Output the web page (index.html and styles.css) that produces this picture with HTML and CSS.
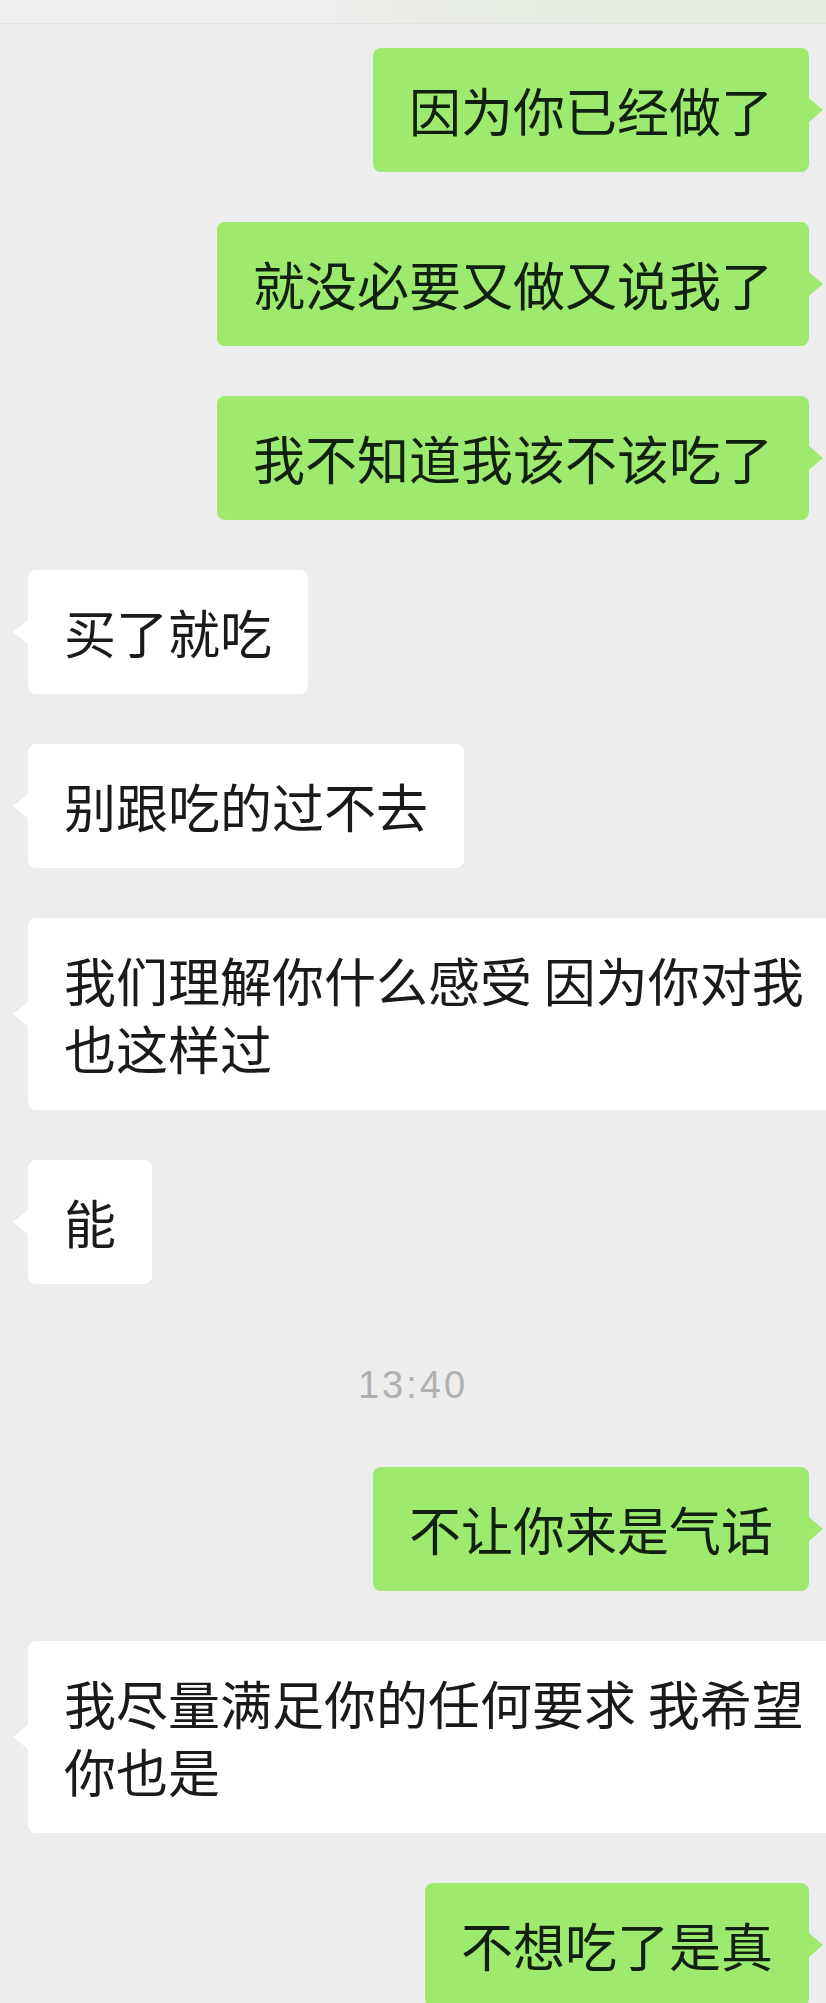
FILE: index.html
```html
<!DOCTYPE html>
<html lang="zh-CN">
<head>
    <meta charset="UTF-8">
    <meta name="viewport" content="width=device-width, initial-scale=1.0">
    <title>聊天记录</title>
    <link rel="stylesheet" href="styles.css">
</head>
<body>
    <div class="topbar"></div>
    <div class="chat">
        <div class="row me"><div class="bubble">因为你已经做了</div></div>
        <div class="row me"><div class="bubble">就没必要又做又说我了</div></div>
        <div class="row me"><div class="bubble">我不知道我该不该吃了</div></div>
        <div class="row other"><div class="bubble">买了就吃</div></div>
        <div class="row other"><div class="bubble">别跟吃的过不去</div></div>
        <div class="row other"><div class="bubble wide">我们理解你什么感受 因为你对我也这样过</div></div>
        <div class="row other"><div class="bubble">能</div></div>
        <div class="time">13:40</div>
        <div class="row me"><div class="bubble">不让你来是气话</div></div>
        <div class="row other"><div class="bubble wide">我尽量满足你的任何要求 我希望你也是</div></div>
        <div class="row me"><div class="bubble">不想吃了是真</div></div>
    </div>
</body>
</html>
```

FILE: styles.css
```css
body {
    margin: 0;
    background: #ededed;
    font-family: "Noto Sans CJK SC", "Noto Sans", sans-serif;
    overflow: hidden;
}
.topbar {
    height: 23px;
    background: linear-gradient(to right, #efefef 0%, #eeeeee 38%, #e8ece4 52%, #e5ebe1 100%);
    border-bottom: 1px solid #e1e1e1;
}
.chat {
    display: flex;
    flex-direction: column;
    gap: 50px;
    padding-top: 24px;
}
.row {
    display: flex;
}
.row.me {
    justify-content: flex-end;
    padding-right: 17px;
}
.row.other {
    justify-content: flex-start;
    padding-left: 28px;
}
.bubble {
    position: relative;
    font-size: 52px;
    line-height: 68px;
    padding: 28px 36px;
    border-radius: 8px;
    color: #1a1a1a;
    background: #ffffff;
    white-space: nowrap;
}
/* long messages run off the right edge of the screenshot */
.bubble.wide {
    white-space: normal;
    flex: 1;
    padding-right: 0;
    border-radius: 8px 0 0 8px;
}
.me .bubble {
    background: #9eea6f;
    color: #112010;
}
.bubble::before {
    content: "";
    position: absolute;
    top: 50%;
    margin-top: -12px;
    border-top: 12px solid transparent;
    border-bottom: 12px solid transparent;
}
.me .bubble::before {
    right: -14px;
    border-left: 14px solid #9eea6f;
}
.other .bubble::before {
    left: -15px;
    border-right: 15px solid #ffffff;
}
.time {
    text-align: center;
    font-family: "Liberation Sans", Arial, sans-serif;
    font-size: 38px;
    letter-spacing: 3px;
    line-height: 40px;
    color: #b0b0b0;
    padding: 31px 0 12px;
}
```
